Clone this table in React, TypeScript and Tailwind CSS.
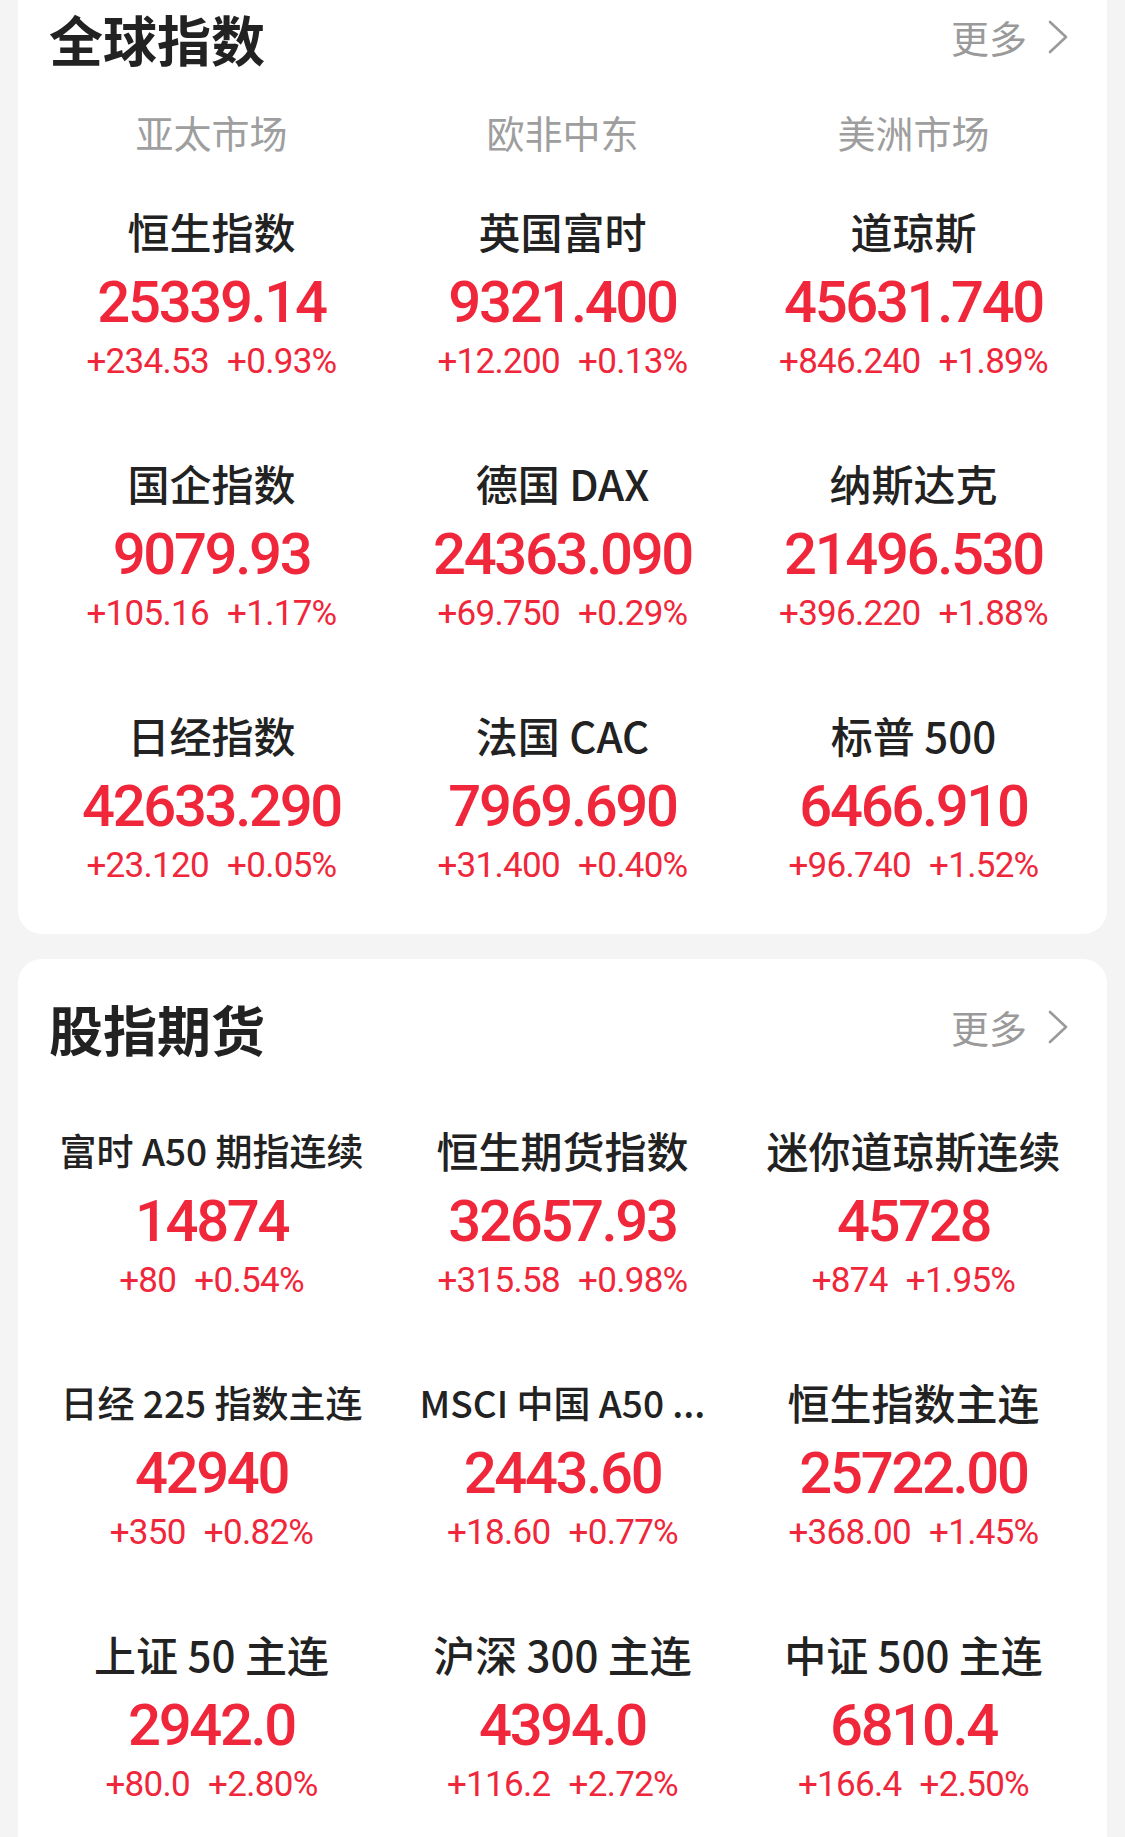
import React from "react";

type Quote = {
  name: string;
  value: string;
  chg: string;
  pct: string;
  small?: boolean;
};

const globalIndex: Quote[] = [
  { name: "恒生指数", value: "25339.14", chg: "+234.53", pct: "+0.93%" },
  { name: "英国富时", value: "9321.400", chg: "+12.200", pct: "+0.13%" },
  { name: "道琼斯", value: "45631.740", chg: "+846.240", pct: "+1.89%" },
  { name: "国企指数", value: "9079.93", chg: "+105.16", pct: "+1.17%" },
  { name: "德国 DAX", value: "24363.090", chg: "+69.750", pct: "+0.29%" },
  { name: "纳斯达克", value: "21496.530", chg: "+396.220", pct: "+1.88%" },
  { name: "日经指数", value: "42633.290", chg: "+23.120", pct: "+0.05%" },
  { name: "法国 CAC", value: "7969.690", chg: "+31.400", pct: "+0.40%" },
  { name: "标普 500", value: "6466.910", chg: "+96.740", pct: "+1.52%" },
];

const futures: Quote[] = [
  { name: "富时 A50 期指连续", value: "14874", chg: "+80", pct: "+0.54%", small: true },
  { name: "恒生期货指数", value: "32657.93", chg: "+315.58", pct: "+0.98%" },
  { name: "迷你道琼斯连续", value: "45728", chg: "+874", pct: "+1.95%" },
  { name: "日经 225 指数主连", value: "42940", chg: "+350", pct: "+0.82%", small: true },
  { name: "MSCI 中国 A50 ...", value: "2443.60", chg: "+18.60", pct: "+0.77%", small: true },
  { name: "恒生指数主连", value: "25722.00", chg: "+368.00", pct: "+1.45%" },
  { name: "上证 50 主连", value: "2942.0", chg: "+80.0", pct: "+2.80%" },
  { name: "沪深 300 主连", value: "4394.0", chg: "+116.2", pct: "+2.72%" },
  { name: "中证 500 主连", value: "6810.4", chg: "+166.4", pct: "+2.50%" },
];

const Header: React.FC<{ title: string }> = ({ title }) => (
  <div className="flex items-center justify-between h-[64px] pl-[13px] pr-[20px]">
    <h2 className="text-[54px] leading-[64px] font-bold text-[#222]">{title}</h2>
    <div className="flex items-center gap-[20px] text-[38px] leading-[60px] text-[#9a9a9a] -mt-[4px]">
      <span>更多</span>
      <svg width="22" height="36" viewBox="0 0 22 36" fill="none">
        <polyline
          points="3,3 19,18 3,33"
          stroke="#9a9a9a"
          strokeWidth="2.6"
          strokeLinecap="round"
          strokeLinejoin="round"
        />
      </svg>
    </div>
  </div>
);

const Cell: React.FC<{ q: Quote }> = ({ q }) => (
  <div className="flex flex-col items-center">
    <div
      className={
        q.small
          ? "h-[48px] leading-[48px] text-[37px] font-medium text-[#222] whitespace-nowrap"
          : "h-[48px] leading-[48px] text-[42px] font-medium text-[#222] whitespace-nowrap"
      }
    >
      {q.name}
    </div>
    <div className="mt-[22px] h-[50px] leading-[50px] text-[58px] font-medium tracking-[-0.04em] text-[#f0263a] font-['Roboto',sans-serif]">
      {q.value}
    </div>
    <div className="mt-[15px] h-[40px] leading-[40px] text-[35px] tracking-[-0.02em] text-[#f0263a] font-['Roboto',sans-serif] flex gap-[18px]">
      <span>{q.chg}</span>
      <span>{q.pct}</span>
    </div>
  </div>
);

export default function App() {
  return (
    <div className="w-[1125px] min-h-[1837px] bg-[#f4f4f4] font-['Noto_Sans_CJK_SC',sans-serif] overflow-hidden">
      <div className="mx-[18px] bg-white rounded-b-[24px] px-[18px] pt-[7px] pb-[48px]">
        <Header title="全球指数" />
        <div className="mt-[37px] grid grid-cols-3 h-[48px] text-[38px] leading-[48px] text-[#9e9e9e] text-center">
          <span>亚太市场</span>
          <span>欧非中东</span>
          <span>美洲市场</span>
        </div>
        <div className="mt-[51px] grid grid-cols-3 gap-y-[77px]">
          {globalIndex.map((q) => (
            <Cell key={q.name} q={q} />
          ))}
        </div>
      </div>

      <div className="mt-[25px] mx-[18px] bg-white rounded-[24px] px-[18px] pt-[38px] pb-[60px]">
        <Header title="股指期货" />
        <div className="mt-[65px] grid grid-cols-3 gap-y-[77px]">
          {futures.map((q) => (
            <Cell key={q.name} q={q} />
          ))}
        </div>
      </div>
    </div>
  );
}
